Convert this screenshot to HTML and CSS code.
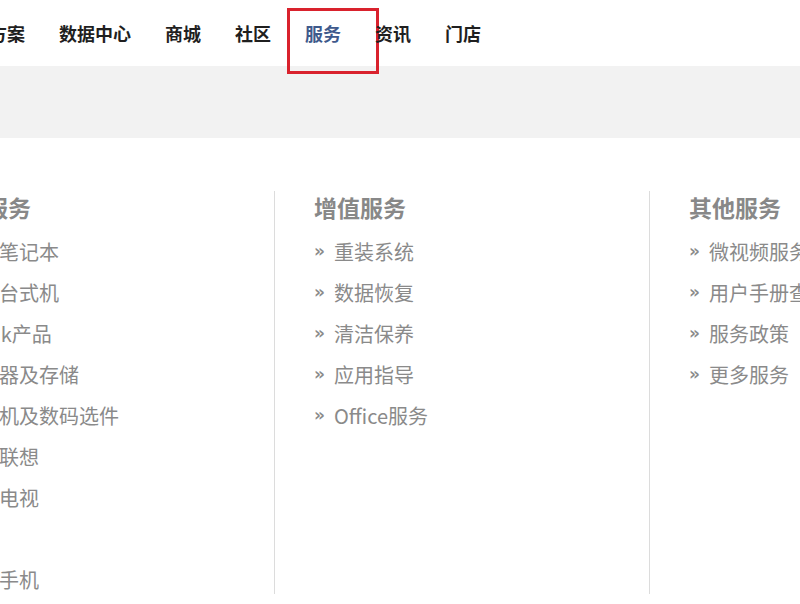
FILE: index.html
```html
<!DOCTYPE html>
<html lang="zh-CN">
<head>
<meta charset="utf-8">
<title>服务</title>
<link rel="stylesheet" href="styles.css">
</head>
<body>
<div class="page">
  <header class="header">
    <ul class="nav">
      <li class="nav-item">解决方案</li>
      <li class="nav-item">数据中心</li>
      <li class="nav-item">商城</li>
      <li class="nav-item">社区</li>
      <li class="nav-item active">服务<span class="mark"></span></li>
      <li class="nav-item">资讯</li>
      <li class="nav-item">门店</li>
    </ul>
  </header>
  <div class="band"></div>
  <div class="menu">
    <div class="col">
      <h3 class="col-title">硬件服务</h3>
      <ul class="links">
        <li><span class="arr">»</span>联想笔记本</li>
        <li><span class="arr">»</span>联想台式机</li>
        <li><span class="arr">»</span>Think产品</li>
        <li><span class="arr">»</span>服务器及存储</li>
        <li><span class="arr">»</span>一体机及数码选件</li>
        <li><span class="arr">»</span>关于联想</li>
        <li><span class="arr">»</span>智能电视</li>
        <li><span class="arr">»</span>ZUK</li>
        <li><span class="arr">»</span>联想手机</li>
      </ul>
    </div>
    <div class="col divided">
      <h3 class="col-title">增值服务</h3>
      <ul class="links">
        <li><span class="arr">»</span>重装系统</li>
        <li><span class="arr">»</span>数据恢复</li>
        <li><span class="arr">»</span>清洁保养</li>
        <li><span class="arr">»</span>应用指导</li>
        <li><span class="arr">»</span>Office服务</li>
      </ul>
    </div>
    <div class="col divided">
      <h3 class="col-title">其他服务</h3>
      <ul class="links">
        <li><span class="arr">»</span>微视频服务</li>
        <li><span class="arr">»</span>用户手册查询</li>
        <li><span class="arr">»</span>服务政策</li>
        <li><span class="arr">»</span>更多服务</li>
      </ul>
    </div>
  </div>
</div>
</body>
</html>
```

FILE: styles.css
```css
html, body {
  margin: 0;
  padding: 0;
  background: #ffffff;
}
body {
  width: 800px;
  height: 604px;
  overflow: hidden;
  font-family: "Noto Sans CJK SC", "Noto Sans", sans-serif;
}
.page {
  width: 800px;
  overflow: hidden;
}
.header {
  height: 66px;
  display: flex;
  align-items: center;
}
.nav {
  list-style: none;
  margin: 0 0 0 -64px;
  padding: 0;
  display: flex;
  white-space: nowrap;
}
.nav-item {
  position: relative;
  padding: 0 17px;
  font-size: 18px;
  font-weight: bold;
  line-height: 24px;
  color: #1f1f1f;
}
.nav-item.active {
  color: #3f5a8c;
}
.mark {
  position: absolute;
  left: -1px;
  top: -13px;
  width: 86px;
  height: 60px;
  border: 3px solid #d9222d;
  box-sizing: content-box;
  pointer-events: none;
}
.band {
  height: 72px;
  background: #f2f2f2;
}
.menu {
  display: flex;
  margin-left: -101px;
  padding-top: 53px;
  height: 403px;
}
.col {
  flex: 0 0 375px;
  width: 375px;
  box-sizing: border-box;
  padding-left: 40px;
  white-space: nowrap;
  overflow: visible;
}
.col.divided {
  border-left: 1px solid #dcdcdc;
  padding-left: 39px;
}
.col-title {
  margin: 0 0 8px 0;
  font-size: 23px;
  line-height: 32px;
  font-weight: bold;
  color: #888888;
}
.links {
  list-style: none;
  margin: 0;
  padding: 0;
}
.links li {
  display: flex;
  align-items: center;
  height: 41px;
  font-size: 20px;
  line-height: 28px;
  color: #8a8a8a;
}
.arr {
  flex: 0 0 20px;
  width: 20px;
  font-family: "DejaVu Sans", sans-serif;
  font-size: 17px;
  line-height: 20px;
  font-weight: bold;
  color: #8a8a8a;
  margin-top: -2px;
}
```
